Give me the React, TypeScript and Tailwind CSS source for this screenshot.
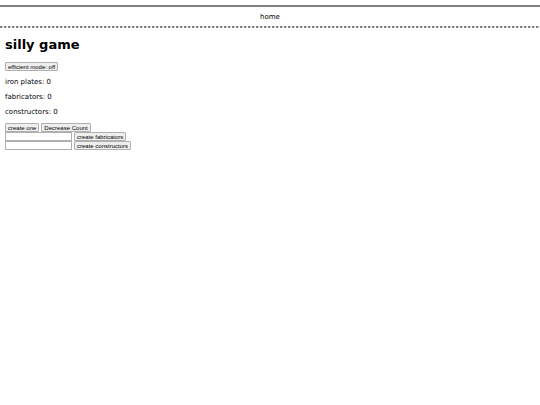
import { useState } from 'react';

const buttonClass =
  'h-[9px] px-[2px] flex items-center justify-center whitespace-nowrap rounded-[1px] border border-[#b0b0b0] bg-[#efefef] font-["Liberation_Sans",Arial,sans-serif] text-[6px] leading-none text-black';

const inputClass =
  'h-[9px] w-[67px] border border-[#b0b0b0] bg-white px-px font-["Liberation_Sans",Arial,sans-serif] text-[6px] leading-none text-black';

export default function App() {
  const [efficient, setEfficient] = useState(false);
  const [plates, setPlates] = useState(0);
  const [fabricators, setFabricators] = useState(0);
  const [constructors, setConstructors] = useState(0);
  const [fabricatorInput, setFabricatorInput] = useState('');
  const [constructorInput, setConstructorInput] = useState('');

  return (
    <div className='min-h-screen bg-white pt-[5px] font-["DejaVu_Sans",Verdana,sans-serif] text-[7px] leading-[9px] text-black'>
      <nav className="border-t-2 border-[#808080]">
        <div className="flex justify-center pt-[6px] pb-[4px]">
          <a href="/">home</a>
        </div>
        {/* Dashed rule */}
        <div className="h-[2px] bg-[repeating-linear-gradient(to_right,#808080_0px_2px,#c8c8c8_2px_3px,#ffffff_3px_4px)]" />
      </nav>

      <main className="px-[5px] pt-[9px]">
        <h1 className="text-[13px] leading-4 font-bold">silly game</h1>

        <div className="mt-[9px] flex">
          <button className={buttonClass} onClick={() => setEfficient(!efficient)}>
            efficient mode: {efficient ? 'on' : 'off'}
          </button>
        </div>

        {/* Counters */}
        <div className="mt-[7px] mb-[6px] flex flex-col gap-[6px]">
          <p>iron plates: {plates}</p>
          <p>fabricators: {fabricators}</p>
          <p>constructors: {constructors}</p>
        </div>

        {/* Controls */}
        <div className="flex gap-[2px]">
          <button className={buttonClass} onClick={() => setPlates(plates + 1)}>create one</button>
          <button className={buttonClass} onClick={() => setPlates(plates - 1)}>Decrease Count</button>
        </div>
        <div className="flex gap-[2px]">
          <input type="text" aria-label="fabricators to create" className={inputClass} value={fabricatorInput} onChange={(e) => setFabricatorInput(e.target.value)} />
          <button className={buttonClass} onClick={() => setFabricators(fabricators + Number(fabricatorInput))}>create fabricators</button>
        </div>
        <div className="flex gap-[2px]">
          <input type="text" aria-label="constructors to create" className={inputClass} value={constructorInput} onChange={(e) => setConstructorInput(e.target.value)} />
          <button className={buttonClass} onClick={() => setConstructors(constructors + Number(constructorInput))}>create constructors</button>
        </div>
      </main>
    </div>
  );
}
